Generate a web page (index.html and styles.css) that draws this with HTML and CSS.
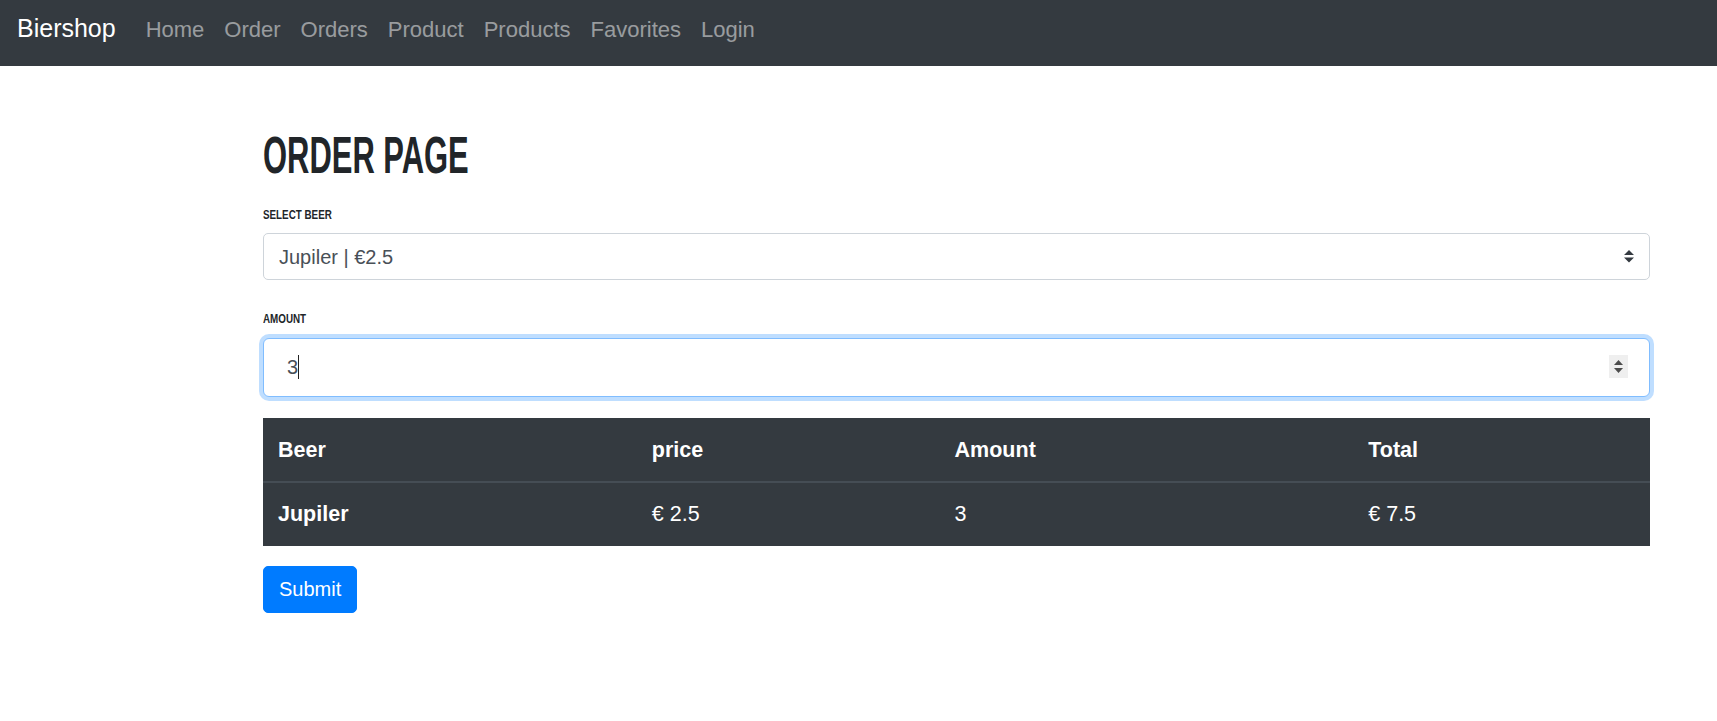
FILE: index.html
```html
<!DOCTYPE html>
<html lang="en">
<head>
<meta charset="utf-8">
<title>Biershop</title>
<link rel="stylesheet" href="styles.css">
</head>
<body>
<nav class="navbar">
  <a class="brand" href="#">Biershop</a>
  <ul class="nav-links">
    <li><a href="#">Home</a></li>
    <li><a href="#">Order</a></li>
    <li><a href="#">Orders</a></li>
    <li><a href="#">Product</a></li>
    <li><a href="#">Products</a></li>
    <li><a href="#">Favorites</a></li>
    <li><a href="#">Login</a></li>
  </ul>
</nav>
<main class="content">
  <h1 class="page-title"><span class="squeeze">Order page</span></h1>
  <form class="order-form">
    <div class="form-group group-beer">
      <label class="field-label label-beer" for="beer"><span class="squeeze-sm">Select beer</span></label>
      <div class="select-wrap">
        <select id="beer" class="select-control">
          <option>Jupiler | €2.5</option>
        </select>
        <svg class="select-arrow" width="10" height="13" viewBox="0 0 4 5" aria-hidden="true"><path d="M2 0L0 2h4zm0 5L0 3h4z" fill="#343a40"/></svg>
      </div>
    </div>
    <div class="form-group group-amount">
      <label class="field-label label-amount" for="amount"><span class="squeeze-sm">Amount</span></label>
      <div class="input-wrap">
        <input id="amount" class="input-control is-focused" type="number" value="3">
        <span class="fake-caret" aria-hidden="true"></span>
        <span class="spinner" aria-hidden="true">
          <svg width="19" height="23" viewBox="0 0 19 23"><path d="M5 10h9l-4.5-5z" fill="#4d4d4d"/><path d="M5 13h9l-4.5 5z" fill="#4d4d4d"/></svg>
        </span>
      </div>
    </div>
    <table class="order-table">
      <thead>
        <tr><th>Beer</th><th>price</th><th>Amount</th><th>Total</th></tr>
      </thead>
      <tbody>
        <tr><th>Jupiler</th><td>€ 2.5</td><td>3</td><td>€ 7.5</td></tr>
      </tbody>
    </table>
    <button type="button" class="btn-submit">Submit</button>
  </form>
</main>
</body>
</html>
```
FILE: styles.css
```css
* { box-sizing: border-box; }
html, body { margin: 0; padding: 0; }
body {
  font-family: "Liberation Sans", Arial, sans-serif;
  font-size: 20px;
  line-height: 1.5;
  color: #212529;
  background: #fff;
}
.navbar {
  display: flex;
  align-items: center;
  height: 66px;
  padding: 0 16px 8px 17px;
  background: #343a40;
}
.brand {
  font-size: 25px;
  color: #fff;
  text-decoration: none;
  margin-right: 20px;
  line-height: 1.5;
}
.nav-links {
  display: flex;
  list-style: none;
  margin: 0;
  padding: 0;
}
.nav-links a {
  display: block;
  padding: 0 10px;
  font-size: 22px;
  color: rgba(255, 255, 255, 0.5);
  text-decoration: none;
}
.content {
  margin: 0 67px 0 263px;
  padding-top: 60px;
}
.page-title {
  margin: 0 0 22px 0;
  font-size: 52px;
  line-height: 59px;
  font-weight: 700;
  text-transform: uppercase;
  color: #212529;
}
.squeeze {
  display: inline-block;
  transform: scaleX(0.595);
  transform-origin: left center;
  white-space: nowrap;
}
.field-label {
  display: block;
  font-size: 13.2px;
  line-height: 16px;
  font-weight: 700;
  text-transform: uppercase;
  color: #212529;
  margin-bottom: 9px;
}
.squeeze-sm {
  display: inline-block;
  transform: scaleX(0.745);
  transform-origin: left center;
  white-space: nowrap;
}
.label-beer { margin-bottom: 10px; }
.group-beer { margin-bottom: 31px; }
.label-amount { margin-bottom: 11px; }
.group-amount { margin-bottom: 21px; }
.select-wrap { position: relative; }
.select-control {
  display: block;
  width: 100%;
  height: 47px;
  padding: 7.5px 35px 7.5px 15px;
  font-family: inherit;
  font-size: 20px;
  line-height: 30px;
  color: #495057;
  background: #fff;
  border: 1px solid #ced4da;
  border-radius: 5px;
  -webkit-appearance: none;
  appearance: none;
}
.select-arrow {
  position: absolute;
  right: 16px;
  top: 17px;
  width: 10px;
  height: 12.5px;
  pointer-events: none;
}
.input-wrap { position: relative; }
.input-control {
  display: block;
  width: 100%;
  height: 59px;
  padding: 10px 20px 10px 23px;
  font-family: inherit;
  font-size: 20px;
  line-height: 30px;
  color: #495057;
  background: #fff;
  border: 1px solid #ced4da;
  border-radius: 6px;
  outline: none;
  -moz-appearance: textfield;
}
.input-control::-webkit-inner-spin-button,
.input-control::-webkit-outer-spin-button {
  -webkit-appearance: none;
  margin: 0;
}
.input-control.is-focused,
.input-control:focus {
  border-color: #80bdff;
  box-shadow: 0 0 0 4px rgba(0, 123, 255, 0.25);
}
.fake-caret {
  position: absolute;
  left: 35px;
  top: 17px;
  width: 1px;
  height: 24px;
  background: #222;
}
.spinner {
  position: absolute;
  right: 22px;
  top: 17px;
  width: 19px;
  height: 23px;
  background: #efefef;
  display: block;
}
.spinner svg { display: block; }
.order-table {
  width: 100%;
  border-collapse: collapse;
  background: #343a40;
  color: #fff;
  font-size: 21.5px;
  margin-bottom: 20px;
}
.order-table th,
.order-table td {
  padding: 15px;
  text-align: left;
  vertical-align: top;
  line-height: 1.5;
  border-top: 1px solid #454d55;
}
.order-table th { font-weight: 700; }
.order-table td { font-weight: 400; }
.order-table thead th {
  border-top-color: #343a40;
  border-bottom: 2px solid #454d55;
}
.btn-submit {
  display: inline-block;
  padding: 7.5px 15px;
  font-family: inherit;
  font-size: 20px;
  line-height: 30px;
  color: #fff;
  background: #007bff;
  border: 1px solid #007bff;
  border-radius: 5px;
}
```
